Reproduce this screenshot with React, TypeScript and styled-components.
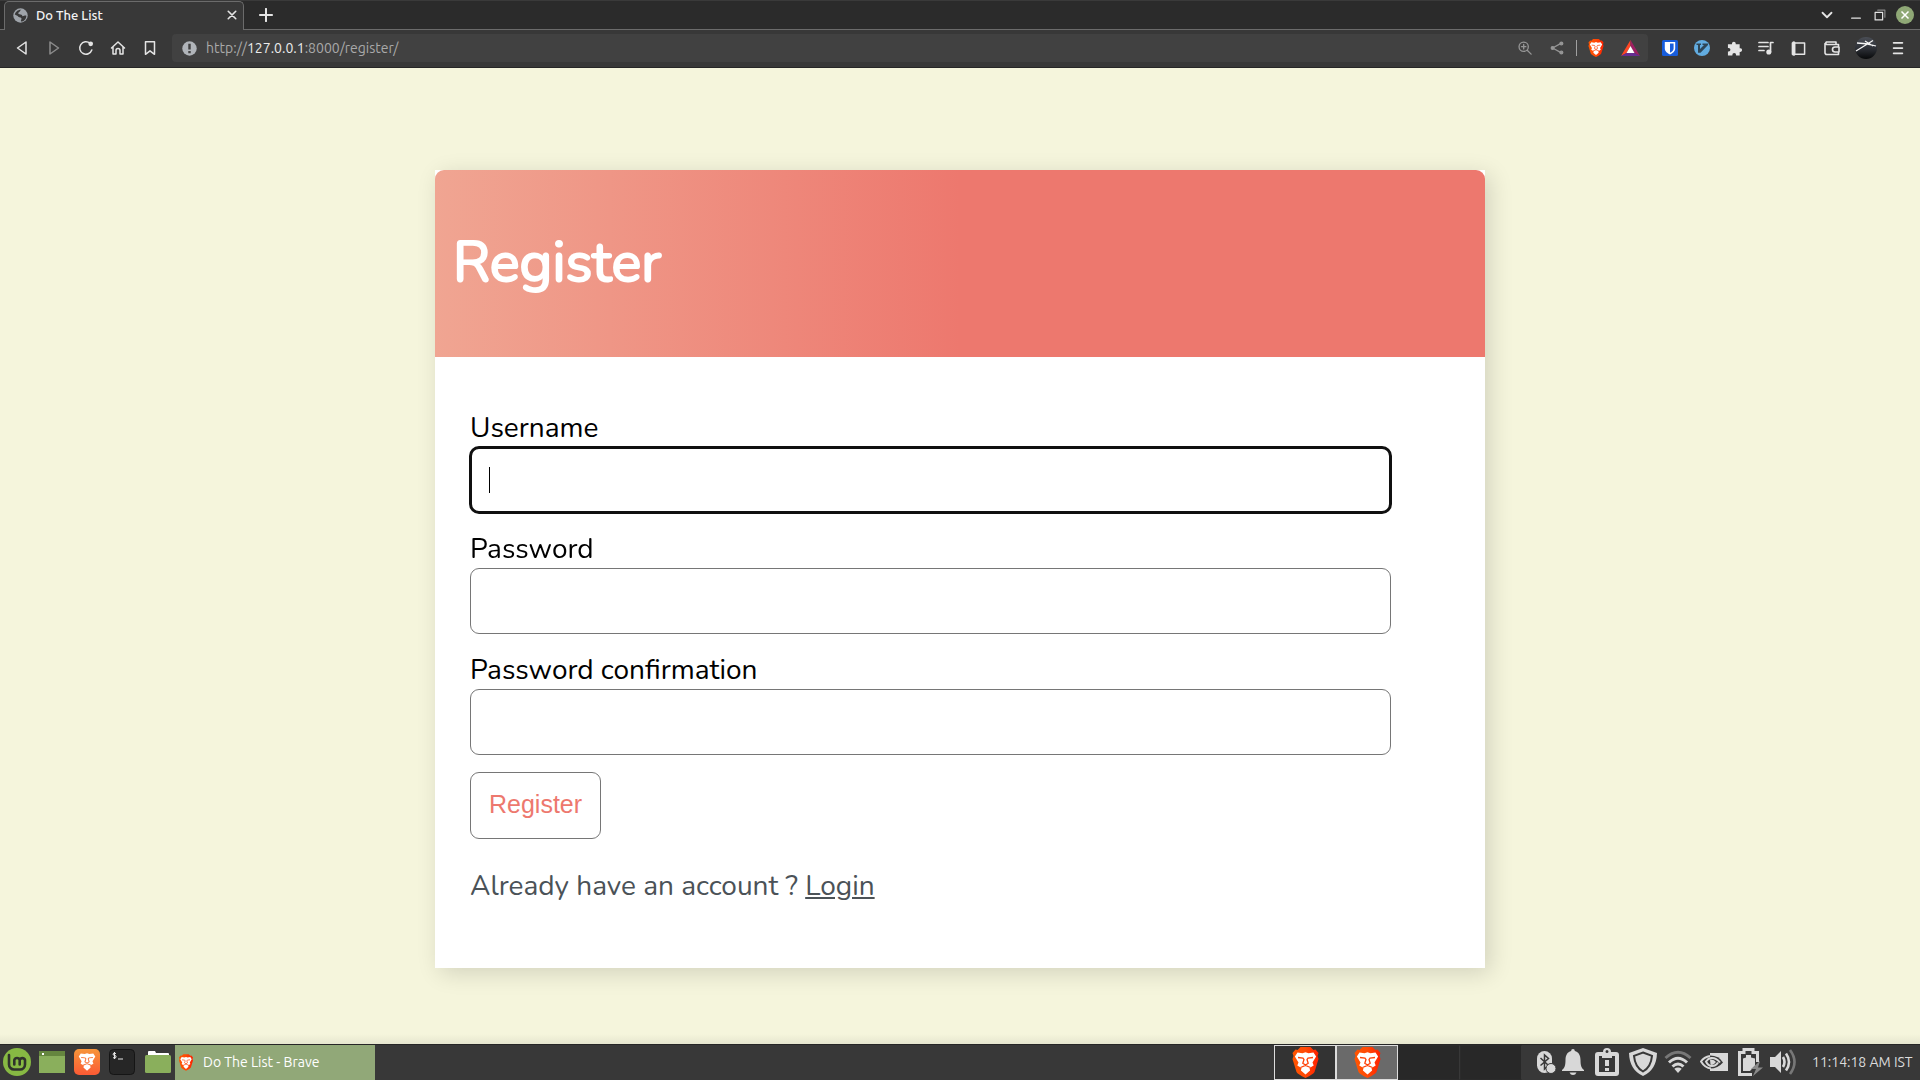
import React from "react";
import styled, { createGlobalStyle } from "styled-components";

const ui = `"Ubuntu", "Noto Sans", "Open Sans", sans-serif`;
const page = `"Nunito", "Lato", "Open Sans", sans-serif`;

const Global = createGlobalStyle`
  *, *::before, *::after { box-sizing: border-box; }
  body { margin: 0; background: #f5f5dc; }
  svg { display: block; flex: none; }
`;

const Desktop = styled.div`
  min-height: 100vh;
  display: flex;
  flex-direction: column;
  font-family: ${ui};
`;

const TabStrip = styled.div`
  height: 30px;
  display: flex;
  align-items: stretch;
  background: #2b2b2b;
  border-top: 1px solid #3a3a3a;
  box-shadow: inset 0 -1px #6b6b6b;
  padding: 0 1px 0 4px;
`;

const Tab = styled.div`
  width: 240px;
  display: flex;
  align-items: center;
  gap: 8px;
  padding: 0 6px 2px 8px;
  background: #383838;
  border: 1px solid #6b6b6b;
  border-bottom: 0;
  border-radius: 5px 5px 0 0;
  color: #f4f4f4;
  font-size: 13px;
  font-weight: 500;
`;

const Grow = styled.span`
  flex: 1;
`;

const IconButton = styled.button<{ $w?: number; $h?: number; $color?: string }>`
  width: ${(p) => p.$w ?? 32}px;
  height: ${(p) => p.$h ?? 28}px;
  display: flex;
  align-items: center;
  justify-content: center;
  flex: none;
  padding: 0;
  border: 0;
  background: none;
  color: ${(p) => p.$color ?? "#e4e4e4"};
`;

const Toolbar = styled.div`
  height: 38px;
  display: flex;
  align-items: center;
  padding: 0 6px 1px;
  background: #383838;
  border-bottom: 1px solid #262626;
`;

const AddressBar = styled.div`
  flex: 1;
  height: 28px;
  display: flex;
  align-items: center;
  margin: 0 6px;
  padding: 0 0 0 10px;
  border-radius: 4px;
  background: #414141;
`;

const Url = styled.div`
  flex: 1;
  padding-left: 9px;
  color: #a9a9a9;
  font-size: 14px;
  line-height: 20px;
  b { color: #ececec; font-weight: 400; }
`;

const Divider = styled.span`
  width: 1px;
  height: 16px;
  margin: 0 3px;
  background: #a0a0a0;
`;

const Page = styled.main`
  flex: 1;
  display: flex;
  flex-direction: column;
  align-items: center;
  padding: 102px 16px 76px;
  background: linear-gradient(to top, #e6e6cf, #f5f5dc 10px);
  font-family: ${page};
`;

const Card = styled.section`
  width: 100%;
  max-width: 1050px;
  background: #fff;
  box-shadow: 5px 5px 22px rgba(0, 0, 0, 0.14);
`;

const CardHeader = styled.header`
  padding: 57px 18px 58px;
  border-radius: 9px 9px 0 0;
  background: linear-gradient(90deg, #f0a592, #ed786e 50%);
`;

const Title = styled.h1`
  margin: 0;
  color: #fff;
  font-size: 56px;
  line-height: 72px;
  font-weight: 400;
  -webkit-text-stroke: 2px #fff;
`;

const Form = styled.form`
  display: flex;
  flex-direction: column;
  align-items: flex-start;
  padding: 52px 94px 63px 35px;
`;

const Field = styled.div`
  width: 100%;
  display: flex;
  flex-direction: column;
  margin-bottom: 17px;
`;

const Label = styled.label`
  color: #000;
  font-size: 28px;
  line-height: 38px;
`;

const Input = styled.input`
  width: 100%;
  height: 66px;
  padding: 0 18px;
  border: 1px solid #767676;
  border-radius: 9px;
  background: #fff;
  font-family: "Liberation Sans", Arial, sans-serif;
  font-size: 25px;
  &:focus {
    outline: 3px solid #101010;
    outline-offset: -2px;
  }
  &:focus:placeholder-shown {
    caret-color: transparent;
    background: #fff linear-gradient(#000, #000) 18px 50% / 1px 26px no-repeat;
  }
`;

const Submit = styled.button`
  height: 67px;
  padding: 0 18px 2px;
  border: 1px solid #767676;
  border-radius: 9px;
  background: #fff;
  color: #ed786e;
  font-family: "Liberation Sans", Arial, sans-serif;
  font-size: 25px;
`;

const Hint = styled.p`
  margin: 28px 0 0;
  color: #4b5257;
  font-size: 28px;
  line-height: 38px;
  a { color: inherit; }
`;

const Panel = styled.footer`
  height: 36px;
  display: flex;
  align-items: stretch;
  background: #383838;
  border-top: 1px solid #262626;
`;

const Launchers = styled.nav`
  display: flex;
`;

const TaskButton = styled.button`
  width: 200px;
  display: flex;
  align-items: center;
  gap: 10px;
  padding: 0 4px 1px;
  border: 0;
  background: #91a878;
  color: #fff;
  font-family: ${ui};
  font-size: 14px;
`;

const Workspace = styled.button<{ $state?: "active" | "used" }>`
  width: 62px;
  display: flex;
  align-items: center;
  justify-content: center;
  padding: 0;
  border: 1px solid ${(p) => (p.$state ? "#dcdcdc" : "#2b2b2b")};
  border-right-color: ${(p) => (p.$state ? "#dcdcdc" : "#383838")};
  background: ${(p) => (p.$state === "active" ? "#6a6a6a" : p.$state ? "#333" : "#282828")};
`;

const Tray = styled.div`
  display: flex;
  align-items: center;
  padding: 0 10px 1px 11px;
`;

const Clock = styled.time`
  width: 98px;
  margin-left: 15px;
  color: #dcdcdc;
  font-size: 14px;
  white-space: nowrap;
`;

const Face = ({ cut }: { cut: string }) => (
  <>
    <path fill="#fff" d="M5 5.500l5 .8 3-1 3 1 5-.8 2.600 4-3.600 6 1.200 3-4.200 2.500.6 2.500-4.600 4-4.600-4 .6-2.500L4.800 18.500l1.200-3-3.600-6z" />
    <path fill="none" stroke={cut} strokeWidth="1.300" d="M5.500 10.500l5 .6 1 1.400-1.200 3.700 2.700 1.800 2.700-1.800-1.200-3.700 1-1.400 5-.6M8 20.500l5-2 5 2" />
  </>
);

const Lion = ({ w, h }: { w: number; h: number }) => (
  <svg width={w} height={h} viewBox="0 0 26 31">
    <defs>
      <linearGradient id="lion">
        <stop offset="0" stopColor="#ff5500" />
        <stop offset=".5" stopColor="#ff4a06" />
        <stop offset="1" stopColor="#ff2000" />
      </linearGradient>
    </defs>
    <path fill="url(#lion)" d="M8 0h10l3 3 2-.5L26 6l-1 3 1 3-4 13q-1 2-9 6-8-4-9-6L0 12l1-3-1-3 3-3.500L5 3z" />
    <Face cut="#ff4208" />
  </svg>
);

const Stroke = ({ s = 16, w = 1.5, children }: { s?: number; w?: number; children: React.ReactNode }) => (
  <svg width={s} height={s} viewBox="0 0 16 16" fill="none" stroke="currentColor" strokeWidth={w} strokeLinecap="round" strokeLinejoin="round">
    {children}
  </svg>
);

const Globe = () => (
  <svg width="15" height="15" viewBox="0 0 16 16">
    <circle cx="8" cy="8" r="7.700" fill="#9fa4aa" />
    <path fill="#383838" d="M9 1.800c-2 .6-1 1.800-2.500 2.400C5 5 5.500 6.500 7 6.700c1.500.2 3 .3 3 2 2 0 2.500-1 4.300-.5C14 12 11.500 14.300 8.500 14.500c-.5-1.500 1-2.500.5-3.500-1-1.500-3.500-1-4-2.500C4 8 2.500 7.500 1.900 7c.6-3 3.500-5.500 7.100-5.200z" />
  </svg>
);

const Info = () => (
  <svg width="15" height="15" viewBox="0 0 16 16">
    <circle cx="8" cy="8" r="7.700" fill="#b0b4b9" />
    <path fill="#414141" d="M6.700 3h2.600v6H6.700zM6.700 10.600h2.600V13H6.700z" />
  </svg>
);

const Bat = () => (
  <svg width="19" height="17" viewBox="0 0 19 17">
    <path fill="#ff4724" d="M9.500 0v6L5.500 13 0 16z" />
    <path fill="#9e1f63" d="M9.500 0l9.500 16-5.500-3-4-7z" />
    <path fill="#662d91" d="M0 16l5.500-3h8l5.500 3z" />
    <path fill="#fff" d="M9.500 6l4 7h-8z" />
  </svg>
);

const Bitwarden = () => (
  <svg width="16" height="16" viewBox="0 0 16 16">
    <rect width="16" height="16" rx="1.500" fill="#175ddc" />
    <path fill="#fff" fillRule="evenodd" d="M2.800 2h10.400v6.500c0 3-2.700 4.700-5.200 6-2.500-1.300-5.200-3-5.200-6zM8 3.500v9.300c2-1.200 3.600-2.400 3.600-4.300v-5z" />
  </svg>
);

const Vimium = () => (
  <svg width="16" height="16" viewBox="0 0 16 16">
    <circle cx="8" cy="8" r="8" fill="#62ace0" />
    <path fill="#2f4656" d="M2.500 3.500H7V5H6v4l4-4H8.500V3.500H14V5L6.500 12.800H4V5H2.500z" />
  </svg>
);

const Puzzle = () => (
  <svg width="15" height="15" viewBox="0 0 16 16">
    <path fill="currentColor" d="M1 3.500h4.300V2.700a2 2 0 0 1 4 0v.8h4.200v4.200h.6a1.900 1.900 0 0 1 0 3.900h-.6V15.500H9.700v-.7a2 2 0 0 0-4 0v.7H1v-4.300h.8a1.800 1.800 0 0 0 0-3.700H1z" />
  </svg>
);

const Avatar = () => (
  <svg width="22" height="22" viewBox="0 0 22 22">
    <defs>
      <linearGradient id="orb" x1="0" y1="0" x2="0" y2="1">
        <stop offset="0" stopColor="#4a4e56" />
        <stop offset=".55" stopColor="#2b2e34" />
        <stop offset="1" stopColor="#08090a" />
      </linearGradient>
    </defs>
    <circle cx="11" cy="11" r="11" fill="url(#orb)" />
    <path stroke="#f4f4f4" strokeWidth="1.300" fill="none" d="M1 14L18 3.500M2 6q9 0 19 3M10 4l8 5" />
  </svg>
);

const Mint = () => (
  <svg width="28" height="28" viewBox="0 0 28 28">
    <circle cx="14" cy="14" r="14" fill="#87b943" />
    <path fill="none" stroke="#30332c" strokeWidth="2.600" strokeLinecap="round" d="M6 7v9.500a5 5 0 0 0 5 5h6a5 5 0 0 0 5-5V12a2.800 2.800 0 0 0-5.300 0v4.500M16.700 12a2.800 2.800 0 0 0-5.400 0v4.500" />
  </svg>
);

const Bluetooth = () => (
  <svg width="20" height="24" viewBox="0 0 20 24">
    <rect x="1" y="1" width="15" height="22" rx="7.500" fill="#d8d8d8" />
    <path d="M4.500 8l8 7.500-4 3.500V5l4 3.500-8 7" fill="none" stroke="#383838" strokeWidth="1.500" />
    <circle cx="15" cy="18.500" r="5" fill="#d8d8d8" stroke="#383838" strokeWidth="1" />
  </svg>
);

const Bell = () => (
  <svg width="22" height="26" viewBox="0 0 22 26">
    <path fill="#d8d8d8" d="M11 0c1.300 0 1.700.8 1.800 2 4 1 5.700 4.500 5.700 9 0 6 1 8 3.500 10v1H0v-1c2.500-2 3.500-4 3.500-10 0-4.500 1.700-8 5.700-9 0-1.200.5-2 1.800-2zM7.500 23.500h7Q13.500 26 11 26t-3.500-2.500z" />
  </svg>
);

const Clipboard = () => (
  <svg width="26" height="28" viewBox="0 0 26 28">
    <path fill="#d8d8d8" fillRule="evenodd" d="M4 4h5q0-4 4-4t4 4h5q3 0 3 3v18q0 3-3 3H4q-3 0-3-3V7q0-3 3-3zm9-2a1.500 1.500 0 1 0 0 3 1.500 1.500 0 0 0 0-3zM5 8v16h16V8h-3v2H8V8z" />
    <path fill="#d8d8d8" d="M11 12h4v6h-4zM11 20h4v3h-4z" />
  </svg>
);

const Shield = () => (
  <svg width="28" height="28" viewBox="0 0 28 28">
    <path fill="#d8d8d8" d="M14 0l14 5q-.5 17-14 23Q.5 22 0 5z" />
    <path fill="#d8d8d8" stroke="#383838" strokeWidth="2" d="M14 4.500l9 3.300Q22 19 14 23.500 6 19 5 7.800z" />
  </svg>
);

const Wifi = () => (
  <svg width="28" height="24" viewBox="0 0 28 24" fill="none" strokeWidth="3">
    <path stroke="#777" d="M1.500 8Q14-3.500 26.500 8" />
    <path stroke="#d8d8d8" d="M5 12.500q9-8.500 18 0M8.500 16.500q5.500-5 11 0" />
    <path fill="#d8d8d8" d="M10.300 18.800q3.700-2.600 7.400 0L14 23z" />
  </svg>
);

const Nvidia = () => (
  <svg width="28" height="18" viewBox="0 0 28 18">
    <path fill="#d8d8d8" d="M10 0h18v18H10z" />
    <path fill="#383838" d="M10 2.500q9 0 13 7-5 6-13 6z" />
    <path fill="none" stroke="#d8d8d8" strokeWidth="2" d="M10 3Q4 4 1 8.500 5 15 11 15.500M20 9.500q-4-5-9-4.500-3 .5-5 3.500 2 4.500 6 4.500t6-3.500" />
    <path fill="#d8d8d8" d="M10 6.500q4-.5 6 2.500-3 4-5.500 2.500z" />
  </svg>
);

const Battery = () => (
  <svg width="26" height="28" viewBox="0 0 26 28">
    <path fill="none" stroke="#d8d8d8" strokeWidth="3" d="M15 26.500H2.500v-22H7v-3h9v3h4.500V14" />
    <path fill="#d8d8d8" d="M9 7h5v2.500l4 1v7L13 23H6V10.500l3-1z" />
    <path fill="#8a8a8a" d="M23 13l-9 8h5l-3 7 10-8.500h-5z" />
  </svg>
);

const Speaker = () => (
  <svg width="26" height="26" viewBox="0 0 26 26" fill="none" strokeWidth="2.600">
    <path fill="#d8d8d8" d="M0 8h5l6-6v22l-6-6H0z" />
    <path stroke="#d8d8d8" d="M13 8q3 5 0 10M16 4.500q6 8.500 0 17" />
    <path stroke="#777" d="M20 1q9 12 0 24" />
  </svg>
);

export default function App() {
  return (
    <Desktop>
      <Global />
      <TabStrip>
        <Tab>
          <Globe />
          Do The List
          <Grow />
          <IconButton $w={10} $h={20} aria-label="Close tab"><Stroke s={10} w={2.6}><path d="M2 2l12 12M14 2L2 14" /></Stroke></IconButton>
        </Tab>
        <IconButton $w={44} aria-label="New tab"><Stroke s={14} w={2.3}><path d="M8 1v14M1 8h14" /></Stroke></IconButton>
        <Grow />
        <IconButton aria-label="Search tabs"><Stroke s={12} w={2.4}><path d="M2 5l6 6 6-6" /></Stroke></IconButton>
        <IconButton $w={26} aria-label="Minimize"><Stroke s={10} w={1.8}><path d="M1 13h14" /></Stroke></IconButton>
        <IconButton $w={22} aria-label="Restore"><Stroke s={12} w={1.6}><path d="M1.500 4.500h10v10h-10z" /><path d="M5 1.500h9.500V11" opacity=".5" /></Stroke></IconButton>
        <IconButton $w={28} aria-label="Close window">
          <svg width="18" height="18" viewBox="0 0 18 18"><circle cx="9" cy="9" r="9" fill="#8fa876" /><path d="M5.500 5.500l7 7M12.500 5.500l-7 7" stroke="#fff" strokeWidth="1.500" /></svg>
        </IconButton>
      </TabStrip>
      <Toolbar>
        <IconButton aria-label="Back"><Stroke><path d="M12 2v12L3.500 8z" /></Stroke></IconButton>
        <IconButton $color="#8c8c8c" aria-label="Forward"><Stroke><path d="M4 2v12L12.500 8z" /></Stroke></IconButton>
        <IconButton aria-label="Reload"><Stroke><path d="M13.800 10A6.200 6.200 0 1 1 12 3.300" /><circle cx="12.700" cy="3.800" r="1.600" fill="currentColor" /></Stroke></IconButton>
        <IconButton aria-label="Home"><Stroke><path d="M1.500 8L8 2l6.500 6M3 7v7h3v-3.500a2 2 0 0 1 4 0V14h3V7" /></Stroke></IconButton>
        <IconButton aria-label="Bookmark"><Stroke><path d="M3.500 1.800h9v12.500L8 10.800l-4.500 3.500z" /></Stroke></IconButton>
        <AddressBar>
          <Info />
          <Url>http://<b>127.0.0.1</b>:8000/register/</Url>
          <IconButton $color="#969696" aria-label="Zoom"><Stroke s={14}><circle cx="6.500" cy="6.500" r="5.300" /><path d="M10.500 10.500l4.500 4.500M4 6.500h5M6.500 4v5" /></Stroke></IconButton>
          <IconButton $color="#969696" aria-label="Share"><Stroke s={14}><path d="M13 2.500L3 8l10 5.500" /><g fill="currentColor"><circle cx="13" cy="2.800" r="1.600" /><circle cx="3" cy="8" r="1.600" /><circle cx="13" cy="13.200" r="1.600" /></g></Stroke></IconButton>
          <Divider />
          <IconButton aria-label="Brave Shields"><Lion w={16} h={18} /></IconButton>
          <IconButton $w={36} aria-label="Brave Rewards"><Bat /></IconButton>
        </AddressBar>
        <IconButton aria-label="Bitwarden"><Bitwarden /></IconButton>
        <IconButton aria-label="Vimium"><Vimium /></IconButton>
        <IconButton aria-label="Extensions"><Puzzle /></IconButton>
        <IconButton aria-label="Playlist"><Stroke w={1.7}><path d="M1 2.500h9M1 6.500h9M1 10.500h5M12.500 12V2.500H15" /><circle cx="10.800" cy="12" r="1.700" fill="currentColor" /></Stroke></IconButton>
        <IconButton aria-label="Sidebar"><Stroke s={15} w={1.6}><path d="M1.500 2h13v12h-13z" /><path d="M3 2v12" strokeWidth="3.500" /></Stroke></IconButton>
        <IconButton $w={36} aria-label="Wallet"><Stroke w={1.6}><path d="M14.500 6V4.500h-12A1.500 1.500 0 0 1 2.500 2H12v2.500M1 3.500v9A1.800 1.800 0 0 0 2.800 14.500h11.700V13M15 7h-4a2.500 2.500 0 0 0 0 5h4z" /></Stroke></IconButton>
        <IconButton aria-label="Profile"><Avatar /></IconButton>
        <IconButton aria-label="Menu"><Stroke s={14} w={2}><path d="M3 2h10M3 8h10M3 14h10" /></Stroke></IconButton>
      </Toolbar>

      <Page>
        <Card>
          <CardHeader><Title>Register</Title></CardHeader>
          <Form onSubmit={(e) => e.preventDefault()}>
            <Field><Label htmlFor="username">Username</Label><Input id="username" placeholder=" " autoFocus /></Field>
            <Field><Label htmlFor="password1">Password</Label><Input id="password1" type="password" placeholder=" " /></Field>
            <Field><Label htmlFor="password2">Password confirmation</Label><Input id="password2" type="password" placeholder=" " /></Field>
            <Submit>Register</Submit>
            <Hint>Already have an account ? <a href="#login">Login</a></Hint>
          </Form>
        </Card>
      </Page>

      <Panel>
        <Launchers>
          <IconButton $w={34} $h={34} aria-label="Menu"><Mint /></IconButton>
          <IconButton $w={36} $h={34} aria-label="Show desktop">
            <svg width="26" height="22" viewBox="0 0 26 22"><path fill="#8aaf5c" d="M0 0h26v22H0z" /><path fill="#65863f" d="M0 0h26v5H0z" /><path fill="#fff" d="M3 2h2v2H3z" /></svg>
          </IconButton>
          <IconButton $w={34} $h={34} aria-label="Brave">
            <svg width="26" height="26" viewBox="0 0 26 26"><defs><linearGradient id="tile" x1="0" y1="0" x2="0" y2="1"><stop offset="0" stopColor="#f7953a" /><stop offset="1" stopColor="#fb5a34" /></linearGradient></defs><rect width="26" height="26" rx="5" fill="url(#tile)" /><g transform="translate(2.900 .2) scale(.78)"><Face cut="#f9763a" /></g></svg>
          </IconButton>
          <IconButton $w={36} $h={34} aria-label="Terminal">
            <svg width="26" height="26" viewBox="0 0 26 26"><rect x=".5" y=".5" width="25" height="25" rx="4" fill="#262626" stroke="#151515" /><path fill="none" stroke="#e6e6e6" d="M7 4.500Q4 3.500 4 5t2 1.500T6.500 9Q5 9.500 4 8.500M5.500 3v7M9 10h5" /></svg>
          </IconButton>
          <IconButton $w={35} $h={34} aria-label="Files">
            <svg width="26" height="22" viewBox="0 0 26 22"><path fill="#fff" d="M3 1q0-1 1-1h6l1 2h12q1 0 1 1v3H3z" /><rect y="4" width="26" height="18" rx="1.500" fill="#8aaf5c" /></svg>
          </IconButton>
        </Launchers>
        <TaskButton><Lion w={14} h={17} />Do The List - Brave</TaskButton>
        <Grow />
        <Workspace $state="used" aria-label="Workspace 1"><Lion w={27} h={31} /></Workspace>
        <Workspace $state="active" aria-label="Workspace 2"><Lion w={27} h={31} /></Workspace>
        <Workspace aria-label="Workspace 3" />
        <Workspace aria-label="Workspace 4" />
        <Tray>
          <IconButton $w={26} aria-label="Bluetooth"><Bluetooth /></IconButton>
          <IconButton $w={28} aria-label="Notifications"><Bell /></IconButton>
          <IconButton $w={40} aria-label="Reports"><Clipboard /></IconButton>
          <IconButton $w={32} aria-label="Updates"><Shield /></IconButton>
          <IconButton $w={38} aria-label="Network"><Wifi /></IconButton>
          <IconButton $w={34} aria-label="NVIDIA"><Nvidia /></IconButton>
          <IconButton $w={38} aria-label="Power"><Battery /></IconButton>
          <IconButton $w={28} aria-label="Sound"><Speaker /></IconButton>
          <Clock>11:14:18 AM IST</Clock>
        </Tray>
      </Panel>
    </Desktop>
  );
}
